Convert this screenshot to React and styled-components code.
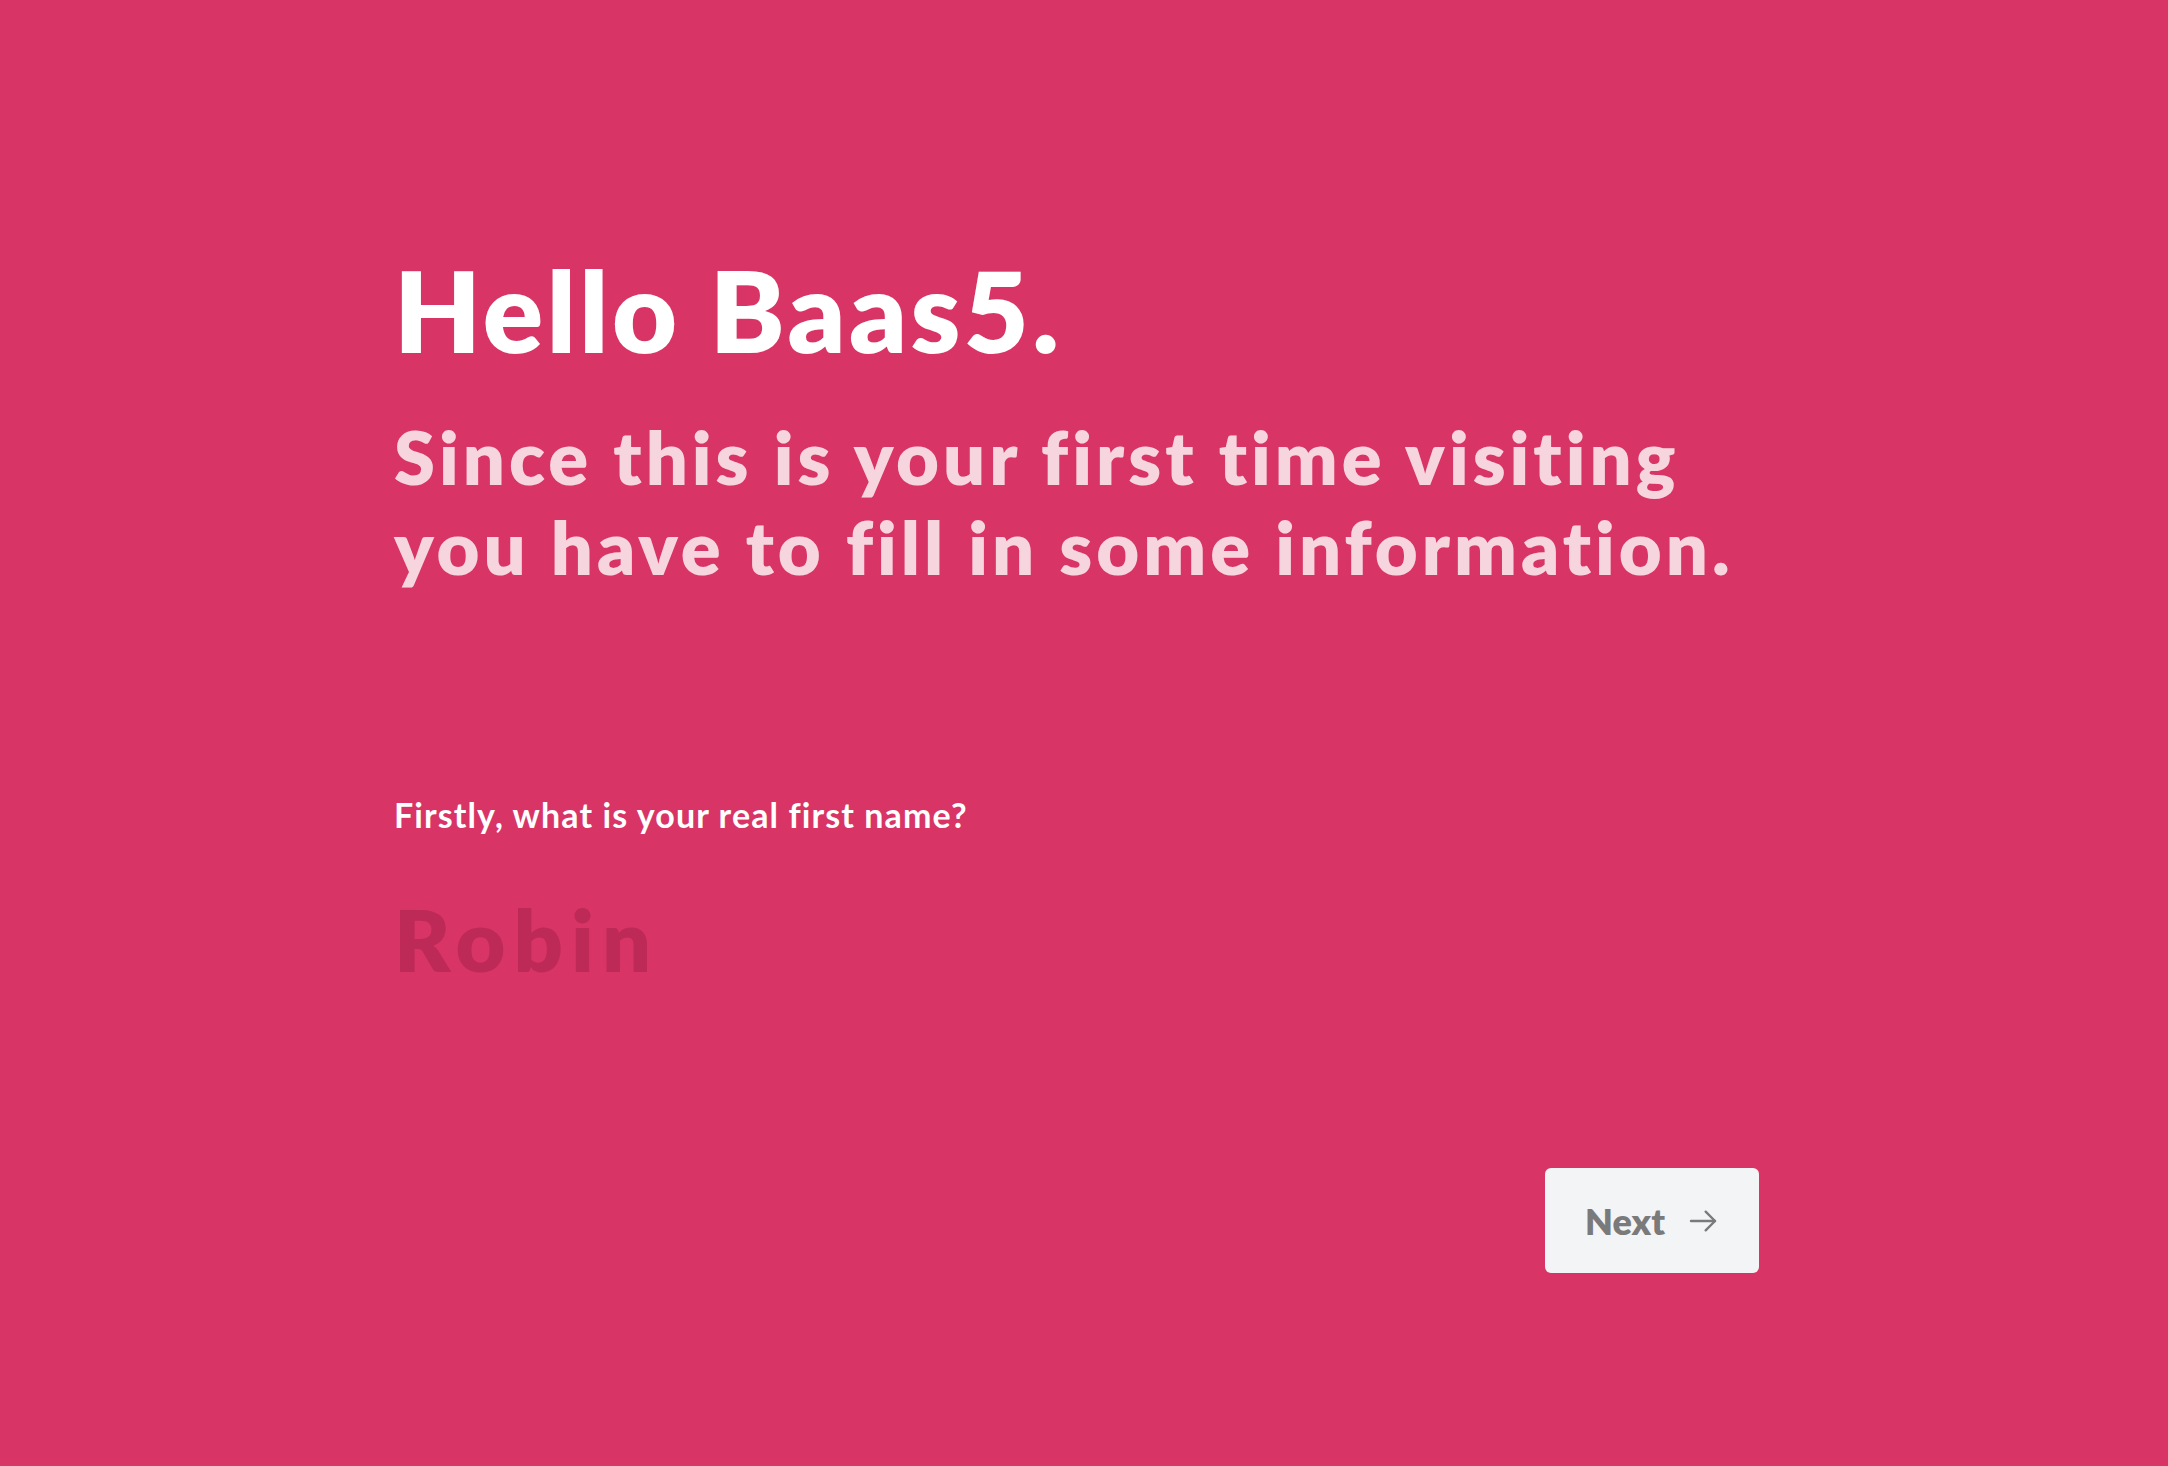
import React, { useState } from 'react'
import styled, { createGlobalStyle } from 'styled-components'

const GlobalStyle = createGlobalStyle`
  html, body {
    margin: 0;
    padding: 0;
    background: #d83465;
  }
`;

const Page = styled.div`
  min-height: 100vh;
  box-sizing: border-box;
  padding: 254px 409px 0 394px;
  background: #d83465;
  font-family: "Lato", "Liberation Sans", sans-serif;
`;

const Title = styled.h1`
  margin: 0;
  font-size: 112px;
  line-height: 1;
  font-weight: 800;
  color: #ffffff;
  letter-spacing: 3.5px;
`;

const Subtitle = styled.h2`
  margin: 46px 0 0;
  font-size: 74px;
  line-height: 90px;
  font-weight: 800;
  color: #f7d5df;
  letter-spacing: 4px;
`;

const Question = styled.div`
  margin-top: 202px;
  display: flex;
  flex-direction: column;
`;

const Label = styled.label`
  font-size: 34px;
  font-weight: 700;
  color: #ffffff;
  letter-spacing: 1.1px;
`;

const NameInput = styled.input`
  margin-top: 52px;
  padding: 0;
  border: none;
  outline: none;
  background: transparent;
  font-family: "Lato", "Liberation Sans", sans-serif;
  font-size: 86px;
  font-weight: 800;
  letter-spacing: 8px;
  color: #ffffff;
  width: 100%;

  &::placeholder {
    color: #bd2a57;
    opacity: 1;
  }
`;

const Actions = styled.div`
  display: flex;
  justify-content: flex-end;
  margin-top: 178px;
`;

const NextButton = styled.button`
  display: flex;
  align-items: center;
  justify-content: center;
  gap: 22px;
  width: 214px;
  height: 105px;
  border: none;
  border-radius: 6px;
  background: #f3f4f6;
  color: #7a7a7a;
  font-family: "Lato", "Liberation Sans", sans-serif;
  font-size: 36px;
  font-weight: 800;
  cursor: pointer;
`;

function ArrowIcon() {
  return (
    <svg width="32" height="32" viewBox="0 0 24 24" fill="none" stroke="currentColor" strokeWidth="1.8" strokeLinecap="round" strokeLinejoin="round">
      <path d="M3 12h18" />
      <path d="M14 5l7 7-7 7" />
    </svg>
  )
}

function App() {
  const [name, setName] = useState('')

  return (
    <Page>
      <GlobalStyle />
      <Title>Hello Baas5.</Title>
      <Subtitle>
        Since this is your first time visiting
        <br />
        you have to fill in some information.
      </Subtitle>
      <Question>
        <Label htmlFor="firstname">Firstly, what is your real first name?</Label>
        <NameInput
          id="firstname"
          placeholder="Robin"
          value={name}
          onChange={(e) => setName(e.target.value)}
        />
      </Question>
      <Actions>
        <NextButton>
          Next
          <ArrowIcon />
        </NextButton>
      </Actions>
    </Page>
  )
}

export default App
